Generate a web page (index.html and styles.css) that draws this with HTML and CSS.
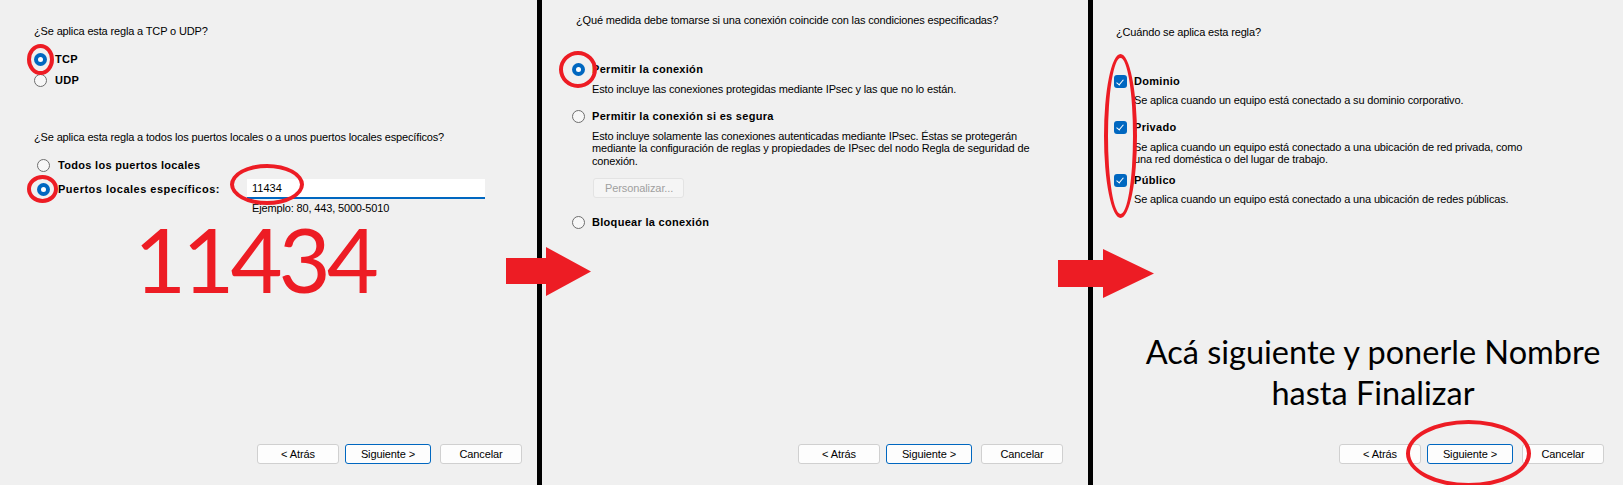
FILE: index.html
```html
<!DOCTYPE html>
<html lang="es">
<head>
<meta charset="utf-8">
<title>Regla de firewall</title>
<link rel="stylesheet" href="styles.css">
</head>
<body>
<div class="page">

  <section class="panel panel-1">
    <p class="question q1">¿Se aplica esta regla a TCP o UDP?</p>
    <div class="options proto">
      <label class="opt"><span class="radio checked"></span><b>TCP</b></label>
      <label class="opt opt-udp"><span class="radio"></span><b>UDP</b></label>
    </div>
    <p class="question q2">¿Se aplica esta regla a todos los puertos locales o a unos puertos locales específicos?</p>
    <div class="options ports">
      <label class="opt"><span class="radio"></span><b>Todos los puertos locales</b></label>
      <div class="port-row">
        <label class="opt port-label"><span class="radio checked"></span><b>Puertos locales específicos:</b></label>
        <div class="port-field">
          <div class="textbox">11434</div>
          <div class="example">Ejemplo: 80, 443, 5000-5010</div>
        </div>
      </div>
    </div>
    <div class="big-number">11434</div>
    <div class="buttons">
      <button class="btn">&lt; Atrás</button>
      <button class="btn btn-default">Siguiente &gt;</button>
      <button class="btn btn-cancel">Cancelar</button>
    </div>
    <span class="ring ring-tcp"></span>
    <span class="ring ring-port"></span>
    <span class="ring ring-input"></span>
  </section>

  <div class="divider"></div>

  <section class="panel panel-2">
    <p class="question q-action">¿Qué medida debe tomarse si una conexión coincide con las condiciones especificadas?</p>
    <div class="options actions">
      <label class="opt opt-allow"><span class="radio checked"></span><b>Permitir la conexión</b></label>
      <p class="desc desc-allow">Esto incluye las conexiones protegidas mediante IPsec y las que no lo están.</p>
      <label class="opt opt-secure"><span class="radio"></span><b>Permitir la conexión si es segura</b></label>
      <p class="desc desc-secure">Esto incluye solamente las conexiones autenticadas mediante IPsec. Éstas se protegerán<br>mediante la configuración de reglas y propiedades de IPsec del nodo Regla de seguridad de<br>conexión.</p>
      <button class="btn btn-disabled" disabled>Personalizar...</button>
      <label class="opt opt-block"><span class="radio"></span><b>Bloquear la conexión</b></label>
    </div>
    <div class="buttons">
      <button class="btn">&lt; Atrás</button>
      <button class="btn btn-default">Siguiente &gt;</button>
      <button class="btn btn-cancel">Cancelar</button>
    </div>
    <span class="ring ring-allow"></span>
  </section>

  <div class="divider"></div>

  <section class="panel panel-3">
    <p class="question q-when">¿Cuándo se aplica esta regla?</p>
    <div class="options profiles">
      <label class="opt opt-domain"><span class="check"></span><b>Dominio</b></label>
      <p class="desc desc-domain">Se aplica cuando un equipo está conectado a su dominio corporativo.</p>
      <label class="opt opt-private"><span class="check"></span><b>Privado</b></label>
      <p class="desc desc-private">Se aplica cuando un equipo está conectado a una ubicación de red privada, como<br>una red doméstica o del lugar de trabajo.</p>
      <label class="opt opt-public"><span class="check"></span><b>Público</b></label>
      <p class="desc desc-public">Se aplica cuando un equipo está conectado a una ubicación de redes públicas.</p>
    </div>
    <p class="note">Acá siguiente y ponerle Nombre<br>hasta Finalizar</p>
    <div class="buttons">
      <button class="btn">&lt; Atrás</button>
      <button class="btn btn-default">Siguiente &gt;</button>
      <button class="btn btn-cancel">Cancelar</button>
    </div>
    <span class="ring ring-checks"></span>
    <span class="ring ring-next"></span>
  </section>

  <svg class="arrow arrow-1" width="86" height="50" viewBox="0 0 86 50"><polygon points="0,11 40,11 40,0 85,24.5 40,49 40,37 0,37"/></svg>
  <svg class="arrow arrow-2" width="97" height="50" viewBox="0 0 97 50"><polygon points="0,11 45,11 45,0 96,24.5 45,49 45,38 0,38"/></svg>
</div>
</body>
</html>
```

FILE: styles.css
```css
* { box-sizing: border-box; }
html, body { margin: 0; padding: 0; }
body {
  background: #f0f0f0;
  font-family: "Liberation Sans", Arial, sans-serif;
  font-size: 11px;
  color: #000;
}
.page {
  position: relative;
  display: flex;
  width: 1623px;
  height: 485px;
  overflow: hidden;
}
.panel {
  position: relative;
  display: flex;
  flex-direction: column;
  height: 100%;
}
.panel-1 { width: 537px; padding-left: 34px; }
.panel-2 { width: 546px; padding-left: 30px; }
.panel-3 { width: 530px; padding-left: 21px; }
.divider { width: 5px; height: 100%; background: #000; flex: none; }

p { margin: 0; }
.question, .desc {
  line-height: 13px;
  letter-spacing: -0.15px;
  white-space: nowrap;
}
.desc { line-height: 12.5px; }

.opt {
  display: flex;
  align-items: center;
  height: 13px;
  line-height: 13px;
  white-space: nowrap;
}
.opt b {
  font-weight: bold;
  letter-spacing: 0.3px;
}
.radio {
  flex: none;
  width: 13px;
  height: 13px;
  border-radius: 50%;
  border: 1px solid #6e6e6e;
  background: #f7f7f7;
  margin-right: 8px;
  position: relative;
}
.radio.checked {
  border: none;
  background: #0067c0;
}
.radio.checked::after {
  content: "";
  position: absolute;
  left: 4px;
  top: 4px;
  width: 5px;
  height: 5px;
  border-radius: 50%;
  background: #fff;
}
.check {
  flex: none;
  width: 13px;
  height: 13px;
  border-radius: 3px;
  background: #0067c0;
  margin-right: 7px;
  position: relative;
}
.check::after {
  content: "";
  position: absolute;
  left: 4px;
  top: 2.5px;
  width: 3px;
  height: 6px;
  border-right: 1px solid #fff;
  border-bottom: 1px solid #fff;
  transform: rotate(40deg);
}

/* Panel 1 */
.q1 { margin-top: 25px; }
.proto { margin-top: 15px; }
.opt-udp { margin-top: 8px; }
.q2 { margin-top: 44px; }
.ports { margin-top: 15px; padding-left: 3px; }
.port-row { display: flex; margin-top: 7px; }
.port-label { height: 20px; width: 210px; }
.port-label b { letter-spacing: 0.5px; }
.port-field { display: flex; flex-direction: column; }
.textbox {
  width: 238px;
  height: 20px;
  background: #fff;
  border-bottom: 2px solid #0067c0;
  padding-left: 5px;
  line-height: 18px;
}
.example {
  margin-top: 3px;
  padding-left: 5px;
  line-height: 13px;
  letter-spacing: -0.15px;
}
.big-number {
  margin-top: 8px;
  margin-left: 100px;
  font-family: Lato, "Liberation Sans", sans-serif;
  font-size: 90px;
  line-height: 70px;
  letter-spacing: -4px;
  color: #ed1c24;
}

/* Buttons */
.buttons {
  margin-top: auto;
  display: flex;
  justify-content: flex-end;
  gap: 6px;
  padding-bottom: 21px;
}
.panel-1 .buttons { padding-right: 15px; }
.panel-2 .buttons { padding-right: 25px; }
.panel-3 .buttons { padding-right: 19px; margin-top: 0; }
.btn {
  font-family: "Liberation Sans", Arial, sans-serif;
  font-size: 11px;
  letter-spacing: -0.1px;
  width: 82px;
  height: 20px;
  padding: 0;
  background: #fdfdfd;
  border: 1px solid #d0d0d0;
  border-radius: 3px;
  color: #000;
}
.btn-default { width: 86px; border-color: #0067c0; }
.btn-cancel { margin-left: 3px; }
.btn-disabled {
  width: 91px;
  height: 20px;
  margin-top: 11px;
  margin-left: 21px;
  background: #f5f5f5;
  border-color: #e3e3e3;
  color: #a0a0a0;
  text-align: left;
  padding-left: 11px;
}

/* Panel 2 */
.q-action { margin-top: 14px; margin-left: 4px; }
.actions { display: flex; flex-direction: column; align-items: flex-start; }
.opt-allow { margin-top: 35.5px; }
.opt-allow .radio, .opt-secure .radio, .opt-block .radio { margin-right: 7px; }
.desc-allow { margin-top: 7px; margin-left: 20px; }
.opt-secure { margin-top: 15px; }
.desc-secure { margin-top: 6.5px; margin-left: 20px; }
.opt-block { margin-top: 18px; }

/* Panel 3 */
.q-when { margin-top: 26px; margin-left: 2px; }
.opt-domain { margin-top: 36px; }
.desc-domain { margin-top: 6px; margin-left: 20px; }
.opt-private { margin-top: 14px; }
.desc-private { margin-top: 7px; margin-left: 20px; }
.opt-public { margin-top: 8px; }
.desc-public { margin-top: 6px; margin-left: 20px; }
.note {
  margin-top: auto;
  margin-bottom: 31px;
  margin-left: 9px;
  text-align: center;
  font-family: Lato, "Liberation Sans", sans-serif;
  font-size: 32.5px;
  line-height: 41px;
  color: #000;
}

/* Annotations */
.ring {
  position: absolute;
  border: 4px solid #ed1c24;
  border-radius: 50%;
  pointer-events: none;
}
.ring-tcp { left: 27px; top: 44px; width: 27px; height: 31px; }
.ring-port { left: 27px; top: 175px; width: 31px; height: 28px; }
.ring-input { left: 230px; top: 164px; width: 74px; height: 41px; }
.ring-allow { left: 17px; top: 51px; width: 38px; height: 37px; }
.ring-checks { left: 11px; top: 54px; width: 33px; height: 164px; }
.ring-next { left: 313px; top: 420px; width: 125px; height: 67px; }

.arrow { position: absolute; fill: #ed1c24; }
.arrow-1 { left: 506px; top: 247px; }
.arrow-2 { left: 1058px; top: 249px; }
```
